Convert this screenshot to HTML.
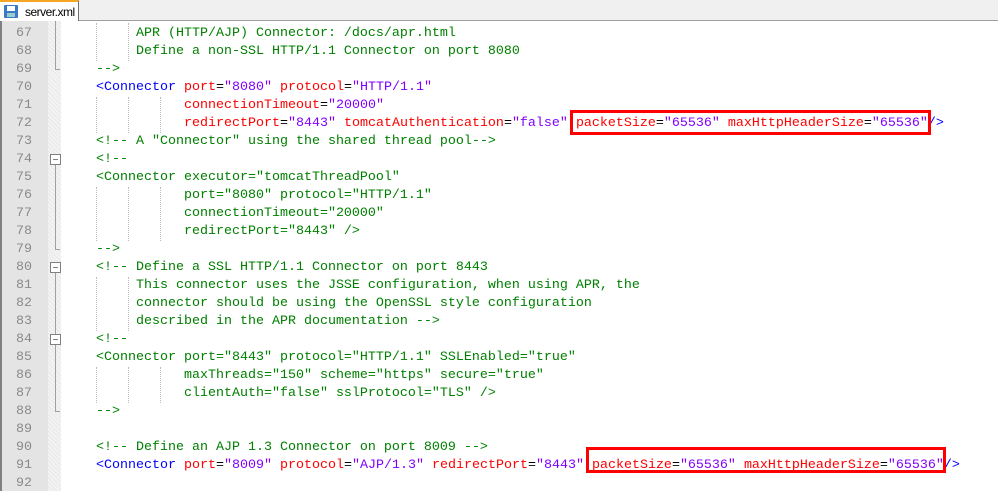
<!DOCTYPE html>
<html><head><meta charset="utf-8"><style>
*{margin:0;padding:0;box-sizing:border-box}
body{width:998px;height:491px;overflow:hidden;background:#fff;position:relative;font-family:"Liberation Mono",monospace;font-size:13.33px}
#strip{position:absolute;left:0;top:0;width:998px;height:21px;background:#f0f0f0;border-bottom:1px solid #a0a0a0}
#tab{position:absolute;left:0;top:0;width:79px;height:21px;background:#fff;border-top:2px solid #f5a623;border-right:1px solid #707070;font-family:"Liberation Sans",sans-serif;font-size:12px;color:#000;padding:3px 0 0 25px;letter-spacing:-0.5px}
#icon{position:absolute;left:4px;top:3px;width:14px;height:13px;background:#3c78c8;border-radius:1px}
#icon:after{content:"";position:absolute;left:3px;top:1px;width:8px;height:5px;background:#fff}
#icon:before{content:"";position:absolute;left:3px;top:8px;width:8px;height:4px;background:#9cc}
#bord{position:absolute;left:0;top:21px;width:2px;height:470px;background:#808080}
#gut{position:absolute;left:2px;top:21px;width:46px;height:470px;background:#e4e4e4}
#fold{position:absolute;left:48px;top:21px;width:13px;height:470px;background:#f3f3f3;background-image:repeating-linear-gradient(45deg,#e8e8e8 0 1px,transparent 1px 3px)}
.ln{position:absolute;left:2px;width:30px;text-align:right;color:#8a8a8a;height:18px;line-height:18px;margin-top:2px}
.l{position:absolute;left:64px;white-space:pre;height:18px;line-height:18px;color:#000;margin-top:2px}
.t{color:#0000ff}.a{color:#ff0000}.v{color:#8000ff}.c{color:#008000}
.fb{position:absolute;left:50px;width:11px;height:11px;border:1px solid #808080;background:#fff}
.fb:after{content:"";position:absolute;left:2px;top:4px;width:5px;height:1px;background:#808080}
.vl{position:absolute;left:55px;width:1px;background:#a0a0a0}
.fe{position:absolute;left:55px;width:5px;height:1px;background:#a0a0a0}
.box{position:absolute;border:3px solid #f00}
.g{position:absolute;width:0;border-left:1px dotted #bbb}
</style></head><body>
<div id="strip"></div>
<div id="tab"><div id="icon"></div>server.xml</div>
<div id="bord"></div><div id="gut"></div><div id="fold"></div>

<div class="ln" style="top:23px">67</div><div class="l c" style="top:23px">         APR (HTTP/AJP) Connector: /docs/apr.html</div>
<div class="ln" style="top:41px">68</div><div class="l c" style="top:41px">         Define a non-SSL HTTP/1.1 Connector on port 8080</div>
<div class="ln" style="top:59px">69</div><div class="l c" style="top:59px">    --&gt;</div>
<div class="ln" style="top:77px">70</div><div class="l" style="top:77px">    <span class="t">&lt;Connector</span> <span class="a">port</span>=<span class="v">"8080"</span> <span class="a">protocol</span>=<span class="v">"HTTP/1.1"</span></div>
<div class="ln" style="top:95px">71</div><div class="l" style="top:95px">               <span class="a">connectionTimeout</span>=<span class="v">"20000"</span></div>
<div class="ln" style="top:113px">72</div><div class="l" style="top:113px">               <span class="a">redirectPort</span>=<span class="v">"8443"</span> <span class="a">tomcatAuthentication</span>=<span class="v">"false"</span> <span class="a">packetSize</span>=<span class="v">"65536"</span> <span class="a">maxHttpHeaderSize</span>=<span class="v">"65536"</span><span class="t">/&gt;</span></div>
<div class="ln" style="top:131px">73</div><div class="l c" style="top:131px">    &lt;!-- A "Connector" using the shared thread pool--&gt;</div>
<div class="ln" style="top:149px">74</div><div class="l c" style="top:149px">    &lt;!--</div>
<div class="ln" style="top:167px">75</div><div class="l c" style="top:167px">    &lt;Connector executor="tomcatThreadPool"</div>
<div class="ln" style="top:185px">76</div><div class="l c" style="top:185px">               port="8080" protocol="HTTP/1.1"</div>
<div class="ln" style="top:203px">77</div><div class="l c" style="top:203px">               connectionTimeout="20000"</div>
<div class="ln" style="top:221px">78</div><div class="l c" style="top:221px">               redirectPort="8443" /&gt;</div>
<div class="ln" style="top:239px">79</div><div class="l c" style="top:239px">    --&gt;</div>
<div class="ln" style="top:257px">80</div><div class="l c" style="top:257px">    &lt;!-- Define a SSL HTTP/1.1 Connector on port 8443</div>
<div class="ln" style="top:275px">81</div><div class="l c" style="top:275px">         This connector uses the JSSE configuration, when using APR, the</div>
<div class="ln" style="top:293px">82</div><div class="l c" style="top:293px">         connector should be using the OpenSSL style configuration</div>
<div class="ln" style="top:311px">83</div><div class="l c" style="top:311px">         described in the APR documentation --&gt;</div>
<div class="ln" style="top:329px">84</div><div class="l c" style="top:329px">    &lt;!--</div>
<div class="ln" style="top:347px">85</div><div class="l c" style="top:347px">    &lt;Connector port="8443" protocol="HTTP/1.1" SSLEnabled="true"</div>
<div class="ln" style="top:365px">86</div><div class="l c" style="top:365px">               maxThreads="150" scheme="https" secure="true"</div>
<div class="ln" style="top:383px">87</div><div class="l c" style="top:383px">               clientAuth="false" sslProtocol="TLS" /&gt;</div>
<div class="ln" style="top:401px">88</div><div class="l c" style="top:401px">    --&gt;</div>
<div class="ln" style="top:419px">89</div>
<div class="ln" style="top:437px">90</div><div class="l c" style="top:437px">    &lt;!-- Define an AJP 1.3 Connector on port 8009 --&gt;</div>
<div class="ln" style="top:455px">91</div><div class="l" style="top:455px">    <span class="t">&lt;Connector</span> <span class="a">port</span>=<span class="v">"8009"</span> <span class="a">protocol</span>=<span class="v">"AJP/1.3"</span> <span class="a">redirectPort</span>=<span class="v">"8443"</span> <span class="a">packetSize</span>=<span class="v">"65536"</span> <span class="a">maxHttpHeaderSize</span>=<span class="v">"65536"</span><span class="t">/&gt;</span></div>
<div class="ln" style="top:473px">92</div>

<div class="vl" style="top:21px;height:48px"></div><div class="fe" style="top:69px"></div>
<div class="fb" style="top:154px"></div>
<div class="vl" style="top:165px;height:84px"></div><div class="fe" style="top:249px"></div>
<div class="fb" style="top:262px"></div>
<div class="vl" style="top:273px;height:66px"></div>
<div class="fb" style="top:334px"></div>
<div class="vl" style="top:345px;height:66px"></div><div class="fe" style="top:411px"></div>

<div class="g" style="left:96px;top:23px;height:38px"></div>
<div class="g" style="left:128px;top:23px;height:38px"></div>
<div class="g" style="left:96px;top:97px;height:36px"></div>
<div class="g" style="left:128px;top:97px;height:36px"></div>
<div class="g" style="left:160px;top:97px;height:36px"></div>
<div class="g" style="left:96px;top:187px;height:54px"></div>
<div class="g" style="left:128px;top:187px;height:54px"></div>
<div class="g" style="left:160px;top:187px;height:54px"></div>
<div class="g" style="left:96px;top:277px;height:54px"></div>
<div class="g" style="left:128px;top:277px;height:54px"></div>
<div class="g" style="left:96px;top:367px;height:36px"></div>
<div class="g" style="left:128px;top:367px;height:36px"></div>
<div class="g" style="left:160px;top:367px;height:36px"></div>

<div class="box" style="left:570px;top:110px;width:361px;height:25px"></div>
<div class="box" style="left:586px;top:447px;width:360px;height:26px"></div>
</body></html>
